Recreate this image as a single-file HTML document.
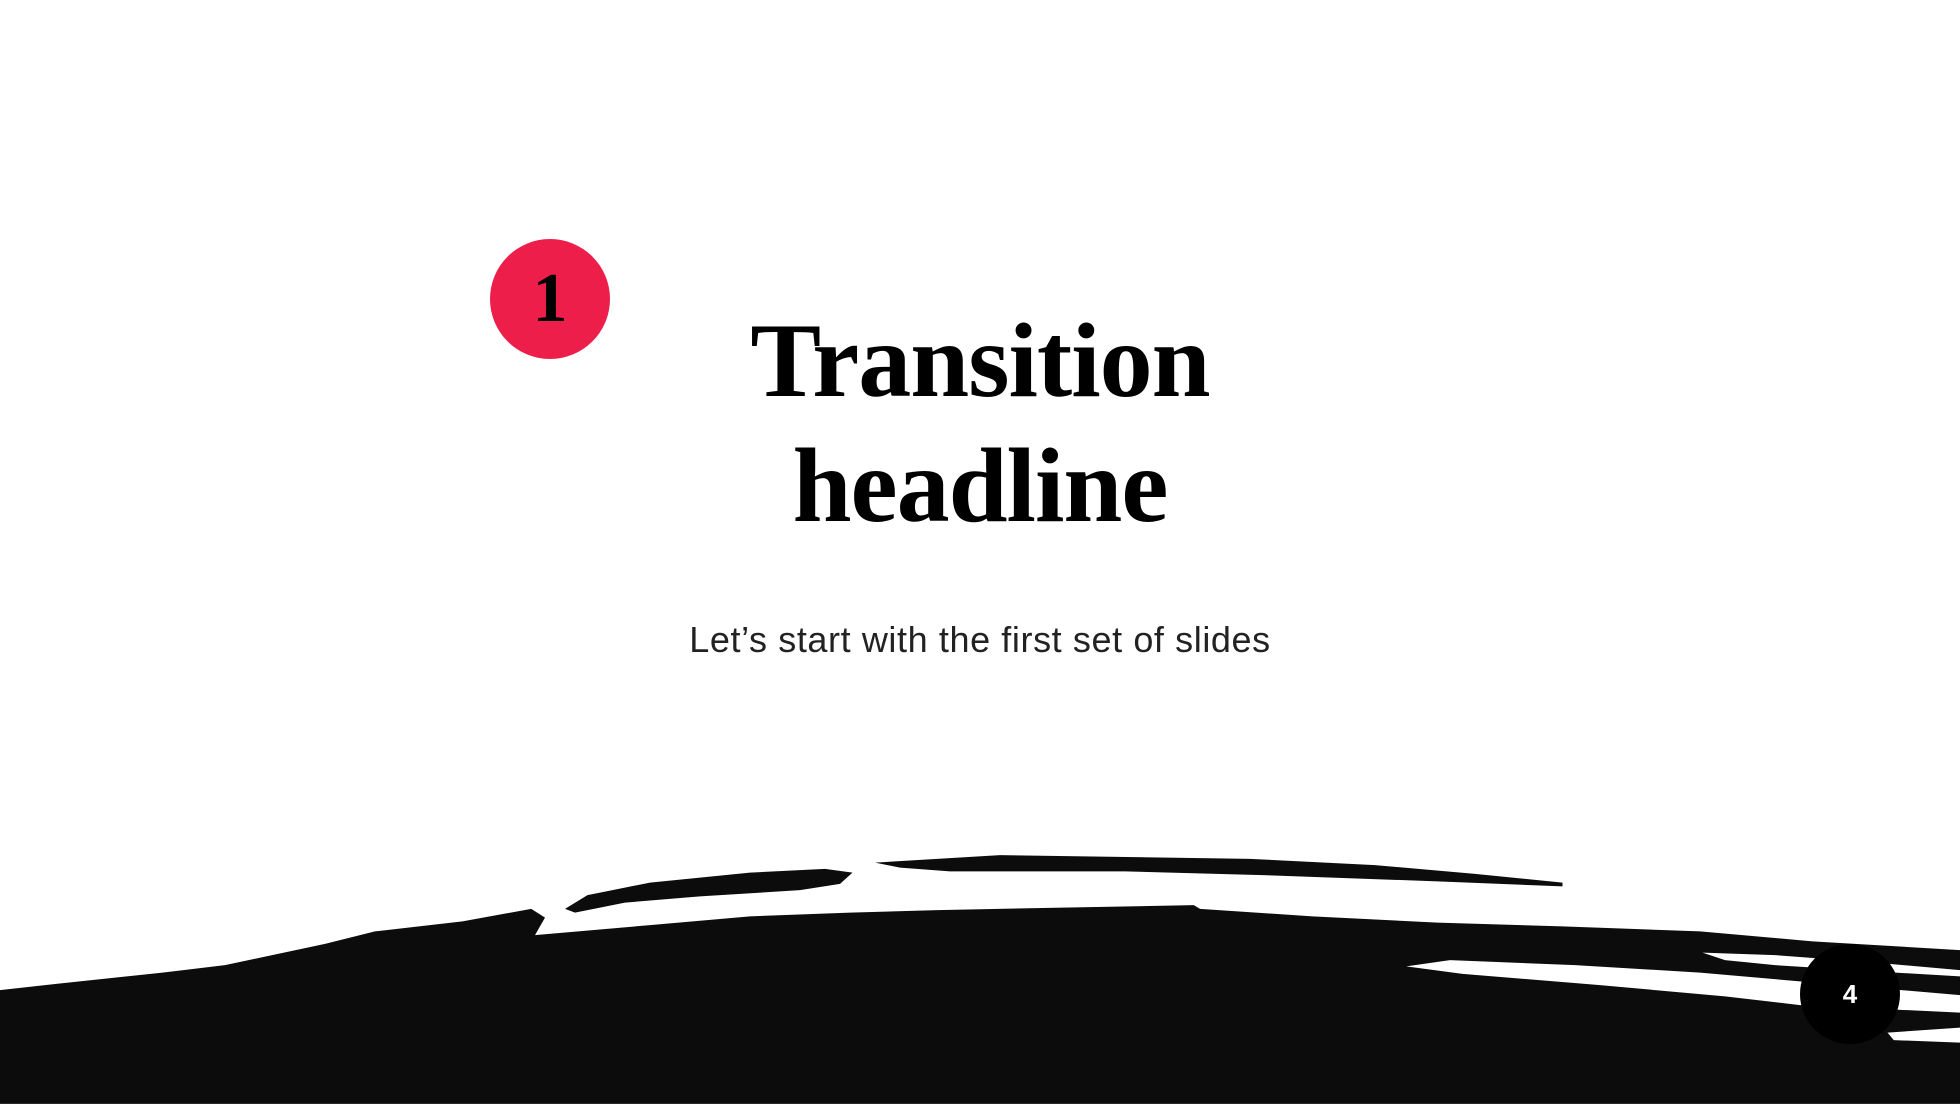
<!DOCTYPE html>
<html><head><meta charset="utf-8"><style>
html,body{margin:0;padding:0;background:#fff;}
body{width:1960px;height:1104px;position:relative;overflow:hidden;}
.c1{position:absolute;left:490px;top:239px;width:120px;height:120px;border-radius:50%;background:#EE1E4B;}
.c1 span{position:absolute;left:0;right:0;top:20px;text-align:center;font:bold 70px "Liberation Serif",serif;color:#000;}
h1{position:absolute;left:0;width:1960px;top:298px;margin:0;text-align:center;font:bold 106px/125px "Liberation Serif",serif;color:#000;letter-spacing:-1px;}
.sub{position:absolute;left:0;width:1960px;top:619px;text-align:center;font:36px "Liberation Sans",sans-serif;color:#222;letter-spacing:0.6px;}
svg{position:absolute;left:0;top:0;}
.pg{position:absolute;left:1800px;top:944px;width:100px;height:100px;border-radius:50%;background:#000;color:#fff;text-align:center;font:bold 26px/100px "Liberation Sans",sans-serif;}
</style></head><body>
<div class="c1"><span>1</span></div>
<h1>Transition<br>headline</h1>
<div class="sub">Let’s start with the first set of slides</div>
<svg width="1960" height="1104" viewBox="0 0 1568 883">
<g fill="#0c0c0c">
<path d="M0,792 L45,787 L130,778 L180,772 L260,755 L300,745 L370,737 L425,727 L436,734 L428,748 L520,740 L600,733 L680,730 L750,728 L850,726 L955,724 L960,727 L1050,733 L1150,738 L1250,741 L1360,745 L1450,753 L1568,760 L1568,883 L0,883 Z"/>
<path d="M452,727 L470,716 L520,706 L600,698 L660,695 L682,698 L672,707 L640,712 L560,717 L500,722 L460,730 Z"/>
<path d="M700,690 L800,684 L1000,687 L1100,692 L1180,699 L1250,706 L1250,709 L1150,705 L1010,700 L900,697 L760,697 L720,694 Z"/>
</g>
<g fill="#fff">
<path d="M1125,773 L1160,768 L1260,772 L1360,778 L1440,785 L1568,796 L1568,810 L1440,804 L1380,797 L1280,788 L1170,779 Z"/>
<path d="M1362,762 L1420,764 L1500,770 L1568,776 L1568,781 L1500,777 L1420,772 L1380,768 Z"/>
<path d="M1510,826 L1568,822 L1568,834 L1515,832 Z"/>
</g>
</svg>
<div class="pg">4</div>
</body></html>
